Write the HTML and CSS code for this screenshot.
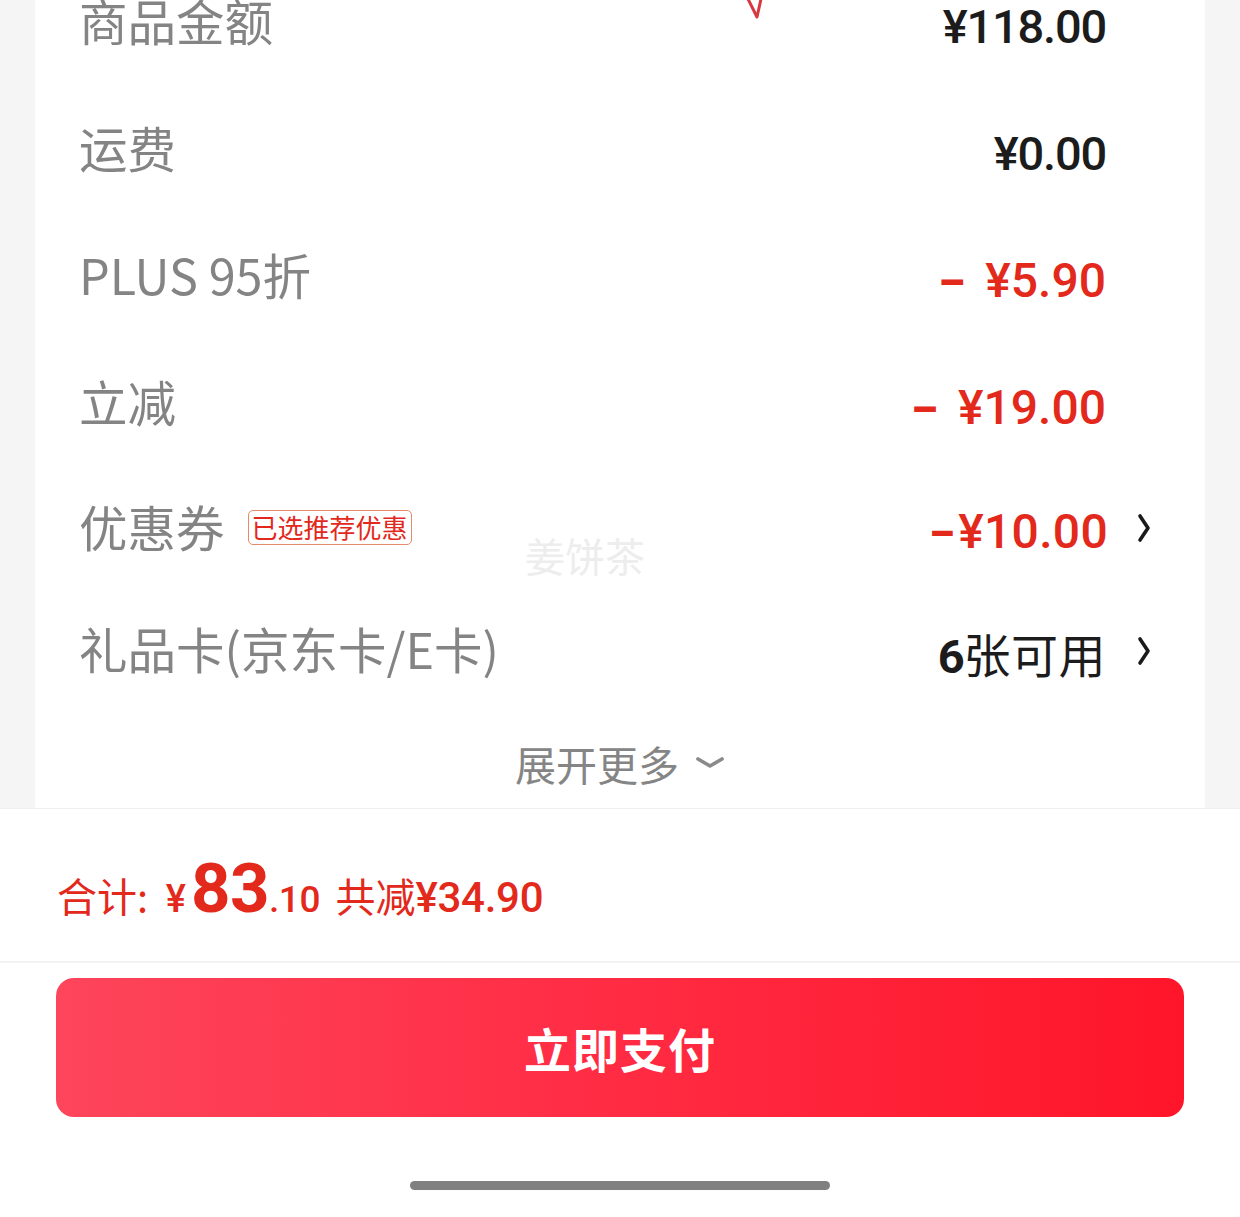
FILE: index.html
```html
<!DOCTYPE html>
<html lang="zh-CN">
<head>
<meta charset="utf-8">
<title>订单结算</title>
<link rel="stylesheet" href="styles.css">
</head>
<body>
<div class="page">
  <div class="card">
    <svg class="stroke-mark" width="24" height="22" viewBox="0 0 24 22"><path d="M2 0 L11 18 L15 0" fill="none" stroke="#d8383f" stroke-width="3" stroke-linecap="round" stroke-linejoin="round"/></svg>
    <div class="row r127">
      <span class="label">商品金额</span>
      <span class="value">¥118.00</span>
    </div>
    <div class="row r127">
      <span class="label">运费</span>
      <span class="value">¥0.00</span>
    </div>
    <div class="row r127">
      <span class="label">PLUS 95折</span>
      <span class="value red"><span class="minus">–</span> ¥5.90</span>
    </div>
    <div class="row r127">
      <span class="label">立减</span>
      <span class="value red"><span class="minus">–</span> ¥19.00</span>
    </div>
    <div class="row r122">
      <span class="label">优惠券<span class="badge">已选推荐优惠</span></span>
      <span class="value red tight"><span class="minus">–</span>¥10.00</span>
      <svg class="chev" width="16" height="30" viewBox="0 0 16 30"><path d="M4 3 L12 15 L4 27" fill="none" stroke="#1a1a1a" stroke-width="3.6" stroke-linecap="round" stroke-linejoin="round"/></svg>
      <span class="watermark">姜饼茶</span>
    </div>
    <div class="row r123">
      <span class="label">礼品卡(京东卡/E卡)</span>
      <span class="value"><b class="num">6</b><span class="cn">张可用</span></span>
      <svg class="chev" width="16" height="30" viewBox="0 0 16 30"><path d="M4 3 L12 15 L4 27" fill="none" stroke="#1a1a1a" stroke-width="3.6" stroke-linecap="round" stroke-linejoin="round"/></svg>
    </div>
    <div class="expand">
      <span class="expand-text">展开更多</span>
      <svg class="down" width="30" height="16" viewBox="0 0 30 16"><path d="M3 5 L15 12 L27 5" fill="none" stroke="#8a8a8a" stroke-width="3.6" stroke-linecap="round" stroke-linejoin="round"/></svg>
    </div>
  </div>
  <div class="bottom">
    <div class="total-row">
      <span class="total">
        <span class="t-label">合计:</span>
        <span class="t-yen">¥</span><span class="t-int">83</span><span class="t-dec">.10</span>
        <span class="t-save-cn">共减</span><span class="t-save">¥34.90</span>
      </span>
    </div>
    <div class="btn-wrap">
      <div class="pay-btn">立即支付</div>
    </div>
    <div class="home-bar"></div>
  </div>
</div>
</body>
</html>
```
FILE: styles.css
```css
html, body {
  margin: 0;
  padding: 0;
}
body {
  width: 1240px;
  height: 1217px;
  overflow: hidden;
  background: #f5f5f5;
  font-family: "Noto Sans CJK SC", "Noto Sans", sans-serif;
}
.page {
  display: flex;
  flex-direction: column;
  height: 1217px;
}
.card {
  position: relative;
  background: #ffffff;
  margin: -41px 35px 0 35px;
  padding: 0 99px 0 44px;
}
.stroke-mark {
  position: absolute;
  left: 711px;
  top: 40px;
}
.row {
  position: relative;
  display: flex;
  align-items: center;
  box-sizing: border-box;
}
.r127 { height: 127px; }
.r122 { height: 122px; }
.r123 { height: 123px; }
.label {
  flex: 1;
  display: flex;
  align-items: center;
  font-size: 48.5px;
  line-height: 1;
  color: #848484;
  white-space: nowrap;
  margin-top: -4px;
}
.badge {
  margin-left: 23px;
  font-size: 26px;
  line-height: 1;
  color: #e2281c;
  border: 1px solid #e58a6a;
  border-radius: 5px;
  padding: 3px 3px 4px 3px;
  margin-top: 2px;
}
.value {
  font-family: "Roboto", "Noto Sans CJK SC", sans-serif;
  font-size: 47px;
  font-weight: 500;
  line-height: 1;
  color: #1c1c1c;
  letter-spacing: -1.2px;
  white-space: nowrap;
  margin-top: 8px;
}
.value.red {
  color: #e2291b;
  font-size: 48px;
  letter-spacing: 0;
}
.value .minus {
  font-size: 42px;
  font-weight: 900;
  margin-right: 9px;
}
.value.tight { margin-right: -2px; letter-spacing: 0.3px; }
.value.tight .minus { margin-right: 4px; font-size: 40px; }
.value .num {
  font-weight: 700;
  font-size: 47px;
}
.value .cn {
  font-family: "Noto Sans CJK SC", sans-serif;
  font-weight: 400;
  font-size: 47px;
  letter-spacing: 0.5px;
}
.chev {
  flex: none;
  margin-left: 30px;
  margin-right: -46px;
}
.watermark {
  position: absolute;
  left: 446px;
  top: 68px;
  font-size: 40px;
  line-height: 1;
  color: #ededed;
  white-space: nowrap;
}
.expand {
  height: 96px;
  box-sizing: border-box;
  padding-top: 31px;
  margin-right: -55px;
  display: flex;
  justify-content: center;
  align-items: flex-start;
  gap: 16px;
}
.expand-text {
  font-size: 41px;
  line-height: 1;
  color: #858585;
}
.down {
  margin-top: 11px;
}
.bottom {
  flex: 1;
  background: #ffffff;
  border-top: 1px solid #eeeeee;
  display: flex;
  flex-direction: column;
}
.total-row {
  height: 154px;
  box-sizing: border-box;
  padding: 6px 0 0 57px;
  display: flex;
  align-items: center;
  border-bottom: 2px solid #f2f2f2;
}
.total {
  color: #e2291b;
  white-space: nowrap;
  line-height: 1;
}
.t-label {
  font-size: 40px;
  margin-right: 14px;
}
.t-yen {
  font-family: "Roboto", sans-serif;
  font-size: 38px;
  font-weight: 500;
  margin-right: 5px;
}
.t-int {
  font-family: "Roboto", sans-serif;
  font-size: 69px;
  font-weight: 700;
  letter-spacing: -0.5px;
}
.t-dec {
  font-family: "Roboto", sans-serif;
  font-size: 37px;
  font-weight: 500;
  letter-spacing: -0.5px;
  margin-right: 12px;
}
.t-save-cn {
  font-size: 40px;
}
.t-save {
  font-family: "Roboto", sans-serif;
  font-size: 42px;
  font-weight: 500;
  letter-spacing: -0.3px;
}
.btn-wrap {
  padding: 15px 56px 0 56px;
}
.pay-btn {
  height: 139px;
  border-radius: 18px;
  background: linear-gradient(90deg, #fd455b 0%, #ff3048 40%, #ff1529 100%);
  color: #ffffff;
  font-size: 47px;
  font-weight: 700;
  letter-spacing: 1px;
  display: flex;
  align-items: center;
  justify-content: center;
}
.home-bar {
  width: 420px;
  height: 9px;
  border-radius: 5px;
  background: #808080;
  margin: 64px auto 0 auto;
}
```
